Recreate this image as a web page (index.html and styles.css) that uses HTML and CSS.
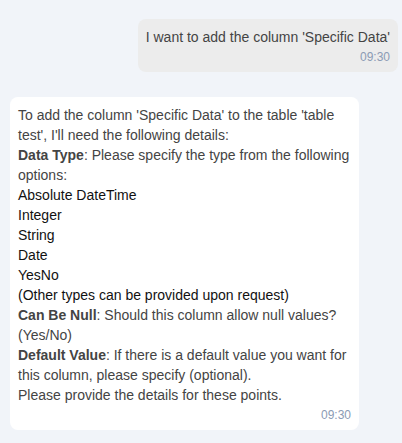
FILE: index.html
```html
<!DOCTYPE html>
<html>
<head>
<meta charset="utf-8">
<link rel="stylesheet" href="styles.css">
</head>
<body>
<div class="chat">
  <div class="row row-user">
    <div class="bubble bubble-user">
      <div class="text">I want to add the column 'Specific Data'</div>
      <div class="time">09:30</div>
    </div>
  </div>
  <div class="row row-bot">
    <div class="bubble bubble-bot">
      <div class="text">
        <div>To add the column 'Specific Data' to the table 'table test', I'll need the following details:</div>
        <div><b>Data Type</b>: Please specify the type from the following options:</div>
        <div class="dark">Absolute DateTime</div>
        <div class="dark">Integer</div>
        <div class="dark">String</div>
        <div class="dark">Date</div>
        <div class="dark">YesNo</div>
        <div class="dark">(Other types can be provided upon request)</div>
        <div><b>Can Be Null</b>: Should this column allow null values? (Yes/No)</div>
        <div><b>Default Value</b>: If there is a default value you want for this column, please specify (optional).</div>
        <div>Please provide the details for these points.</div>
      </div>
      <div class="time">09:30</div>
    </div>
  </div>
</div>
</body>
</html>
```

FILE: styles.css
```css
html, body {
  margin: 0;
  padding: 0;
  background: #f1f4f9;
  font-family: "Liberation Sans", Arial, sans-serif;
}
.chat {
  display: flex;
  flex-direction: column;
  gap: 25px;
  padding: 19px 4px 0 10px;
}
.row {
  display: flex;
}
.row-user {
  justify-content: flex-end;
}
.row-bot {
  justify-content: flex-start;
}
.bubble {
  border-radius: 8px;
  padding: 8px 8px 7px 8px;
  box-sizing: border-box;
}
.bubble-user {
  background: #ececec;
}
.bubble-bot {
  background: #ffffff;
  width: 349px;
}
.text {
  font-size: 14px;
  line-height: 20px;
  color: #444444;
}
.text b {
  font-weight: bold;
}
.dark {
  color: #111111;
}
.time {
  margin-top: 2px;
  font-size: 12px;
  line-height: 16px;
  color: #8b9bb4;
  text-align: right;
}
```
